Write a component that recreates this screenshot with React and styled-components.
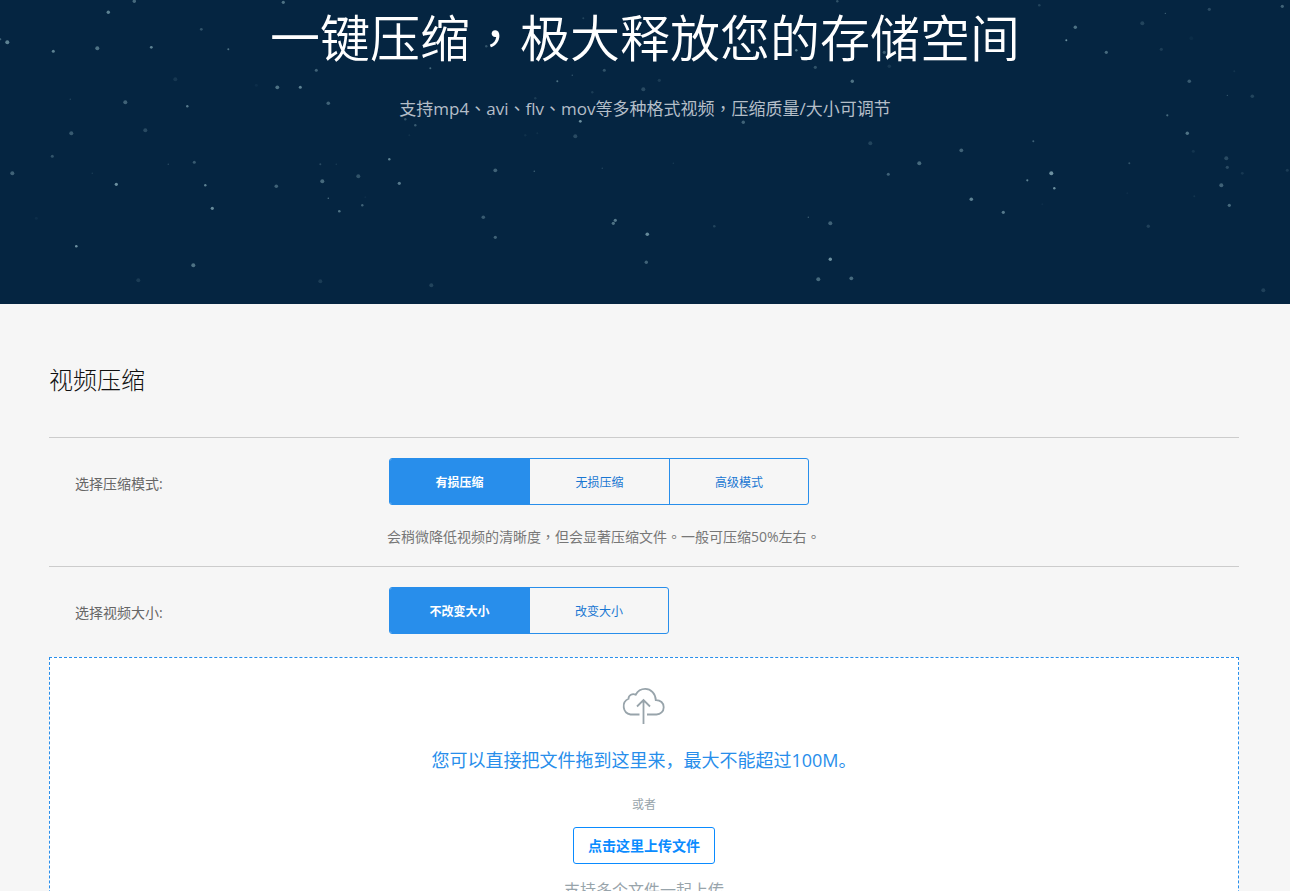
import React, { useState } from "react";
import styled, { createGlobalStyle } from "styled-components";

const GlobalStyle = createGlobalStyle`
  * {
    box-sizing: border-box;
  }
  body {
    margin: 0;
    background: #f6f6f6;
    font-family: "Open Sans", "Noto Sans CJK TC", sans-serif;
    color: #666;
  }
  button {
    font-family: inherit;
    cursor: pointer;
  }
`;

const Hero = styled.header`
  position: relative;
  overflow: hidden;
  height: 304px;
  padding-top: 8px;
  background: #052541;
  text-align: center;
`;

const Sky = styled.svg`
  position: absolute;
  top: 0;
  left: 0;
  width: 100%;
  height: 100%;
  fill: #a9d0d8;
`;

const HeroTitle = styled.h1`
  position: relative;
  margin: 0;
  font-size: 50px;
  line-height: 60px;
  font-weight: 350;
  color: #fff;
`;

const HeroText = styled.p`
  position: relative;
  margin: 29px 0 0;
  font-size: 17px;
  line-height: 24px;
  color: #b4bec8;
`;

const Content = styled.main`
  padding: 60px 51px 0 49px;
`;

const SectionTitle = styled.h2`
  margin: 0 0 41px;
  font-size: 24px;
  line-height: 32px;
  font-weight: 300;
  color: #111;
`;

const Row = styled.section`
  display: grid;
  grid-template-columns: 340px 1fr;
  padding: 20px 0;
  border-top: 1px solid #ccc;
`;

const RowLabel = styled.h3`
  margin: 0;
  padding: 2px 0 0 26px;
  font-size: 14px;
  line-height: 48px;
  font-weight: 400;
  color: #666;
`;

const Tabs = styled.div`
  display: inline-flex;
  border: 1px solid #288eeb;
  border-radius: 3px;
  overflow: hidden;
`;

const Tab = styled.button`
  width: 140px;
  height: 45px;
  padding: 0;
  border: 0;
  border-right: 1px solid #288eeb;
  background: ${(props) => (props.$active ? "#288eeb" : "transparent")};
  color: ${(props) => (props.$active ? "#fff" : "#1976d2")};
  font-size: 12px;
  font-weight: ${(props) => (props.$active ? 700 : 400)};

  &:last-child {
    width: 138px;
    border-right: 0;
  }
`;

const Note = styled.p`
  margin: 23px 0 0 -2px;
  font-size: 14px;
  line-height: 18px;
  color: #777;
`;

const DropZone = styled.section`
  display: flex;
  flex-direction: column;
  align-items: center;
  padding: 30px 0 40px;
  border: 1px dashed #288eeb;
  background: #fff;
  font-family: "Open Sans", "Noto Sans CJK SC", sans-serif;
  color: #98a4ab;
`;

const CloudIcon = styled.svg`
  width: 44px;
  height: 38px;
  fill: none;
  stroke: #98a4ab;
  stroke-width: 1.8;
`;

const DropText = styled.p`
  margin: 20px 0 0;
  font-size: 18px;
  line-height: 28px;
  color: #288eeb;
`;

const OrText = styled.p`
  margin: 21px 0 0;
  font-size: 12px;
  line-height: 20px;
`;

const UploadButton = styled.button`
  margin-top: 12px;
  width: 142px;
  height: 37px;
  padding: 0 0 2px;
  border: 1px solid #0a8bff;
  border-radius: 3px;
  background: #fff;
  color: #0a8bff;
  font-size: 14px;
  font-weight: 700;
`;

const Hint = styled.p`
  margin: 14px 0 0;
  font-size: 16px;
  line-height: 24px;
`;

// x, y, radius, opacity
const stars = [
  [7, 42, 2, 0.6], [0, 39, 1, 0.4], [53, 51, 1.5, 0.6], [97, 48, 2, 0.5],
  [108, 12, 1.7, 0.6], [134, 1, 1.7, 0.45], [151, 47, 1.4, 0.6], [201, 29, 1.4, 0.3],
  [228, 49, 1, 0.5], [283, 2, 1.6, 0.5], [175, 79, 2, 0.12], [256, 85, 1.5, 0.06],
  [277, 87, 1.9, 0.5], [300, 87, 1.5, 0.6], [316, 70, 1.5, 0.4], [328, 103, 1.8, 0.4],
  [70, 99, 0.8, 0.2], [125, 102, 2, 0.4], [187, 106, 1.2, 0.55], [71, 133, 2, 0.35],
  [145, 130, 2, 0.25], [52, 156, 1.5, 0.3], [12, 173, 2, 0.4], [92, 173, 0.8, 0.15],
  [116, 184, 1.6, 0.7], [168, 164, 0.8, 0.25], [194, 162, 1.5, 0.35], [205, 185, 1.2, 0.6],
  [212, 208, 1.6, 0.65], [276, 186, 1.8, 0.4], [76, 246, 1.3, 0.7], [36, 218, 1.5, 0.06],
  [193, 265, 2, 0.5], [138, 280, 2, 0.15], [320, 281, 2, 0.15], [322, 181, 2, 0.45],
  [358, 176, 2, 0.3], [320, 164, 1, 0.25], [336, 164, 0.8, 0.15], [328, 198, 0.8, 0.5],
  [339, 211, 1.3, 0.5], [362, 205, 1.2, 0.4], [365, 197, 1, 0.06], [389, 159, 1.2, 0.6],
  [399, 183, 1.6, 0.55], [405, 119, 1.2, 0.3], [415, 125, 1.2, 0.35], [409, 135, 1, 0.08],
  [431, 285, 2, 0.2], [430, 68, 1, 0.45], [486, 46, 1.2, 0.3], [557, 81, 1, 0.5],
  [572, 75, 0.8, 0.3], [604, 70, 1.5, 0.3], [643, 89, 2, 0.25], [659, 80, 1.6, 0.15],
  [592, 92, 1.2, 0.15], [535, 98, 1.2, 0.15], [580, 121, 1.4, 0.7], [575, 136, 2, 0.25],
  [525, 135, 1.2, 0.08], [537, 133, 1, 0.08], [490, 117, 0.8, 0.3], [583, 18, 1, 0.2],
  [495, 170, 1.9, 0.4], [534, 171, 0.8, 0.4], [602, 168, 0.8, 0.2], [483, 217, 1.8, 0.35],
  [495, 237, 1.6, 0.4], [615, 220, 1.6, 0.55], [613, 223, 1.6, 0.5], [647, 234, 1.8, 0.65],
  [646, 262, 1.7, 0.4], [714, 226, 1.3, 0.2], [673, 163, 0.7, 0.15], [808, 217, 0.7, 0.4],
  [690, 115, 1.7, 0.25], [743, 122, 1.7, 0.4], [748, 110, 1.4, 0.3], [815, 67, 1.6, 0.3],
  [852, 81, 1.7, 0.5], [837, 1, 1.2, 0.3], [796, 50, 1.2, 0.6], [753, 41, 1.4, 0.35],
  [830, 223, 2, 0.4], [830, 259, 1.7, 0.7], [818, 279, 2, 0.45], [851, 278, 1.9, 0.45],
  [884, 52, 1.6, 0.35], [889, 66, 1.8, 0.12], [870, 143, 2, 0.2], [919, 163, 2, 0.45],
  [888, 174, 1.5, 0.4], [961, 150, 1.9, 0.4], [971, 199, 1.8, 0.6], [1003, 212, 1.6, 0.55],
  [1033, 141, 1, 0.4], [1027, 180, 1.1, 0.6], [1051, 173, 2, 0.7], [1054, 188, 1.2, 0.7],
  [1042, 204, 1, 0.06], [1039, 5, 1.3, 0.2], [1075, 27, 1.7, 0.5], [1066, 40, 1, 0.7],
  [1106, 52, 1.6, 0.45], [1165, 13, 0.6, 0.5], [1142, 23, 2, 0.2], [1161, 49, 1.6, 0.15],
  [1209, 9, 1.6, 0.25], [1191, 38, 2, 0.05], [1282, 6, 1.6, 0.4], [1234, 71, 1, 0.1],
  [1189, 81, 1.8, 0.35], [1227, 95, 0.6, 0.4], [1252, 96, 1.8, 0.2], [1167, 115, 1.1, 0.45],
  [1187, 133, 1.7, 0.5], [1193, 151, 1.5, 0.1], [1129, 163, 1, 0.3], [1226, 158, 2, 0.25],
  [1227, 167, 1.6, 0.25], [1242, 173, 1.4, 0.12], [1287, 170, 1.5, 0.15], [1221, 185, 2, 0.4],
  [1229, 205, 1.6, 0.45], [1194, 196, 1, 0.1], [1127, 193, 1, 0.06], [1148, 226, 1.7, 0.18],
  [1263, 290, 2, 0.18],
];

const modes = ["有损压缩", "无损压缩", "高级模式"];
const sizes = ["不改变大小", "改变大小"];

function OptionTabs({ labelledBy, options, value, onChange }) {
  return (
    <Tabs role="group" aria-labelledby={labelledBy}>
      {options.map((option) => (
        <Tab
          key={option}
          type="button"
          $active={option === value}
          aria-pressed={option === value}
          onClick={() => onChange(option)}
        >
          {option}
        </Tab>
      ))}
    </Tabs>
  );
}

export default function App() {
  const [mode, setMode] = useState(modes[0]);
  const [size, setSize] = useState(sizes[0]);

  return (
    <>
      <GlobalStyle />
      <Hero>
        <Sky viewBox="0 0 1290 304" preserveAspectRatio="xMidYMid slice" aria-hidden="true">
          {stars.map(([x, y, r, o]) => (
            <circle key={`${x}-${y}`} cx={x + 0.3} cy={y + 0.3} r={r} opacity={o * 0.9} />
          ))}
        </Sky>
        <HeroTitle>一键压缩，极大释放您的存储空间</HeroTitle>
        <HeroText>支持mp4、avi、flv、mov等多种格式视频，压缩质量/大小可调节</HeroText>
      </Hero>
      <Content>
        <SectionTitle>视频压缩</SectionTitle>
        <Row>
          <RowLabel id="mode-label">选择压缩模式:</RowLabel>
          <div>
            <OptionTabs
              labelledBy="mode-label"
              options={modes}
              value={mode}
              onChange={setMode}
            />
            <Note>会稍微降低视频的清晰度，但会显著压缩文件。一般可压缩50%左右。</Note>
          </div>
        </Row>
        <Row>
          <RowLabel id="size-label">选择视频大小:</RowLabel>
          <div>
            <OptionTabs
              labelledBy="size-label"
              options={sizes}
              value={size}
              onChange={setSize}
            />
          </div>
        </Row>
        <DropZone>
          <CloudIcon viewBox="0 0 44 38" aria-hidden="true">
            <path d="M17.500 26.500H8.500A8.300 8.300 0 0 1 6.500 10.800C6.500 7 10.500 5.100 13.700 6.700C16 2.500 19.500 0.900 23.200 0.900C29 0.900 33.600 5.500 33.800 12.100C38.500 12 41.700 15 41.700 19.200C41.700 23.500 38.500 26.500 34.500 26.500H25" />
            <path d="M21.500 36V12M15 18.500L21.500 12L28 18.500" />
          </CloudIcon>
          <DropText>您可以直接把文件拖到这里来，最大不能超过100M。</DropText>
          <OrText>或者</OrText>
          <UploadButton type="button">点击这里上传文件</UploadButton>
          <Hint>支持多个文件一起上传</Hint>
        </DropZone>
      </Content>
    </>
  );
}
